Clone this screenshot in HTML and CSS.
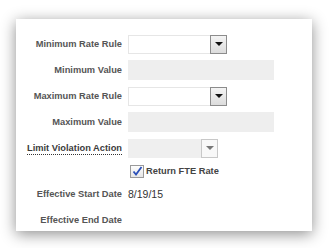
FILE: index.html
```html
<!DOCTYPE html>
<html>
  <head>
    <meta charset="utf-8" />
    <title>Rate Rules</title>
    <link rel="stylesheet" href="styles.css">
  </head>
  <body>
    <div class="card">
      <div class="form-row">
        <label class="form-label">Minimum Rate Rule</label>
        <div class="choice">
          <span class="choice-value"></span>
          <span class="choice-button"><span class="arrow"></span></span>
        </div>
      </div>
      <div class="form-row">
        <label class="form-label">Minimum Value</label>
        <div class="text-field"></div>
      </div>
      <div class="form-row">
        <label class="form-label">Maximum Rate Rule</label>
        <div class="choice">
          <span class="choice-value"></span>
          <span class="choice-button"><span class="arrow"></span></span>
        </div>
      </div>
      <div class="form-row">
        <label class="form-label">Maximum Value</label>
        <div class="text-field"></div>
      </div>
      <div class="form-row">
        <label class="form-label"><span class="hint">Limit Violation Action</span></label>
        <div class="choice disabled">
          <span class="choice-value"></span>
          <span class="choice-button"><span class="arrow"></span></span>
        </div>
      </div>
      <div class="form-row check-row">
        <span class="form-label"></span>
        <label class="check">
          <span class="check-box">
            <svg width="11" height="10" viewBox="0 0 11 10"><path d="M1.5 5.5 L4 8.5 L9.5 1" fill="none" stroke="#2a4fb8" stroke-width="1.8"/></svg>
          </span>
          Return FTE Rate
        </label>
      </div>
      <div class="form-row">
        <label class="form-label">Effective Start Date</label>
        <span class="value">8/19/15</span>
      </div>
      <div class="form-row">
        <label class="form-label">Effective End Date</label>
        <span class="value"></span>
      </div>
    </div>
  </body>
</html>
```

FILE: styles.css
```css
body {
  margin: 0;
  padding: 19px 20px 17px 16px;
  background: #ffffff;
  font-family: "Liberation Sans", Arial, sans-serif;
  font-size: 9.3px;
}

.card {
  height: 212px;
  box-sizing: border-box;
  padding-top: 15px;
  background: #ffffff;
  box-shadow: 0 3px 14px rgba(0, 0, 0, 0.45);
  display: flex;
  flex-direction: column;
  gap: 6px;
}

.form-row {
  display: flex;
  align-items: center;
  height: 20px;
}

.form-label {
  width: 106px;
  margin-right: 6px;
  text-align: right;
  font-weight: bold;
  color: #555;
  white-space: nowrap;
}

.hint {
  color: #3c3c3c;
  border-bottom: 1px dotted #333;
  padding-bottom: 1px;
}

.choice {
  display: flex;
  width: 99px;
  height: 19px;
}

.choice-value {
  flex: 1;
  border: 1px solid #e6e6e6;
  border-right: none;
  background: #fff;
}

.choice-button {
  width: 15px;
  border: 1px solid #8c8c8c;
  background: linear-gradient(#f4f4f4, #dcdcdc);
  display: flex;
  align-items: center;
  justify-content: center;
}

.arrow {
  width: 0;
  height: 0;
  border-left: 4px solid transparent;
  border-right: 4px solid transparent;
  border-top: 4px solid #111;
}

.choice.disabled {
  width: 90px;
}

.choice.disabled .choice-value {
  background: #efefef;
  border-color: #efefef;
}

.choice.disabled .choice-button {
  border-color: #c8c8c8;
  background: #f8f8f8;
}

.choice.disabled .arrow {
  border-top-color: #777;
}

.text-field {
  width: 146px;
  height: 20px;
  background: #eeeeee;
}

.check-row {
  height: 14px;
}

.check {
  display: flex;
  align-items: center;
  gap: 2px;
  margin-left: 2px;
  font-weight: bold;
  color: #444;
}

.check-box {
  width: 12px;
  height: 11px;
  border: 1px solid #9a9a9a;
  background: linear-gradient(#fdfdfd, #e6e6e6);
  display: flex;
  align-items: center;
  justify-content: center;
}

.value {
  color: #333;
  font-size: 10.5px;
}
```
